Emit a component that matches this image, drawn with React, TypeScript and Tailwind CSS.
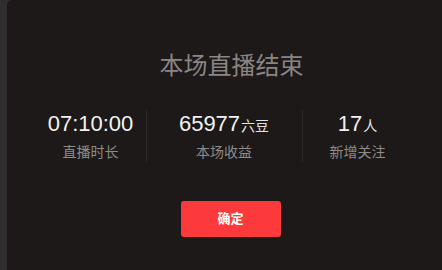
const font = { fontFamily: '"Liberation Sans", "Noto Sans CJK SC", sans-serif' };

function Stat({ value, unit, label }: { value: string; unit?: string; label: string }) {
  return (
    <div className="flex flex-col items-center">
      <div className="flex items-baseline h-[30px] text-[22px] leading-[30px] text-[#f4f2f1]">
        {value}
        {unit && <span className="text-[14px] ml-[1px] text-[#e6e3e2]">{unit}</span>}
      </div>
      <div className="mt-[3px] text-[14px] leading-[20px] text-[#8f8b89]">{label}</div>
    </div>
  );
}

export default function App() {
  return (
    <div className="flex h-[270px] w-[442px] bg-[#2f2f2f]" style={font}>
      <div className="ml-[7px] flex flex-1 flex-col items-center rounded-tl-[5px] bg-[#1c1918]">
        <h1 className="mt-[50px] ml-[14px] text-[24px] leading-[32px] text-[#8a8583]">本场直播结束</h1>
        <div className="mt-[27px] ml-[-1px] flex items-center">
          <div className="w-[110px]">
            <Stat value="07:10:00" label="直播时长" />
          </div>
          <div className="h-[52px] w-px bg-[#2c2827]" />
          <div className="w-[155px]">
            <Stat value="65977" unit="六豆" label="本场收益" />
          </div>
          <div className="h-[52px] w-px bg-[#2c2827]" />
          <div className="w-[110px]">
            <Stat value="17" unit="人" label="新增关注" />
          </div>
        </div>
        <button className="mt-[39px] ml-[12px] h-[36px] w-[100px] rounded-[3px] bg-[#fd3a3b] text-[13px] font-bold text-white">
          确定
        </button>
      </div>
    </div>
  );
}
